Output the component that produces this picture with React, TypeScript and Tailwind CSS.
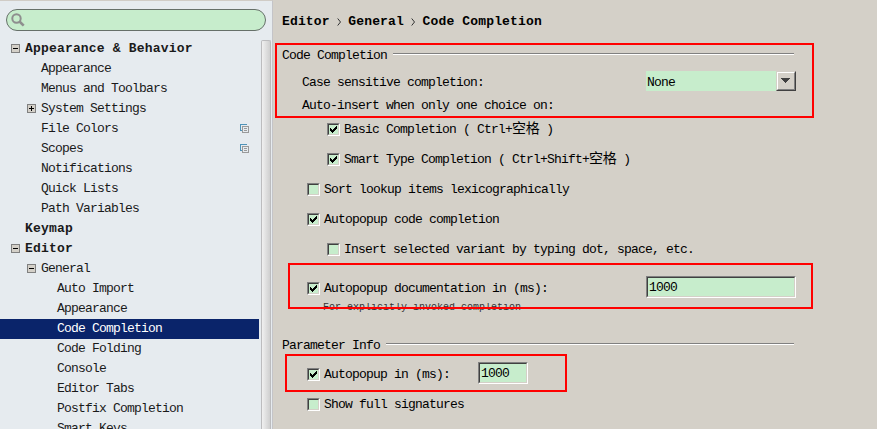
import type { ReactNode } from "react";

const MONO = "font-['Liberation_Mono','Noto_Sans_CJK_SC',monospace]";

type Item = {
  label: string;
  level: 0 | 1 | 2;
  toggle?: "plus" | "minus";
  project?: boolean;
  selected?: boolean;
};

const items: Item[] = [
  { label: "Appearance & Behavior", level: 0, toggle: "minus" },
  { label: "Appearance", level: 1 },
  { label: "Menus and Toolbars", level: 1 },
  { label: "System Settings", level: 1, toggle: "plus" },
  { label: "File Colors", level: 1, project: true },
  { label: "Scopes", level: 1, project: true },
  { label: "Notifications", level: 1 },
  { label: "Quick Lists", level: 1 },
  { label: "Path Variables", level: 1 },
  { label: "Keymap", level: 0 },
  { label: "Editor", level: 0, toggle: "minus" },
  { label: "General", level: 1, toggle: "minus" },
  { label: "Auto Import", level: 2 },
  { label: "Appearance", level: 2 },
  { label: "Code Completion", level: 2, selected: true },
  { label: "Code Folding", level: 2 },
  { label: "Console", level: 2 },
  { label: "Editor Tabs", level: 2 },
  { label: "Postfix Completion", level: 2 },
  { label: "Smart Keys", level: 2 },
];

const indent = ["pl-[11px]", "pl-[27px]", "pl-[43px]"];

function Toggle({ kind }: { kind?: "plus" | "minus" }) {
  if (!kind) return <span className="w-[9px] shrink-0" />;
  return (
    <svg width="9" height="9" viewBox="0 0 9 9" shapeRendering="crispEdges" className="mb-[2px] shrink-0">
      <rect width="9" height="9" fill="#808080" />
      <rect x="1" y="1" width="7" height="7" fill="#d4d0c8" />
      <rect x="2" y="4" width="5" height="1" fill="#000" />
      {kind === "plus" && <rect x="4" y="2" width="1" height="5" fill="#000" />}
    </svg>
  );
}

function ProjectIcon() {
  return (
    <svg width="9" height="9" viewBox="0 0 9 9" shapeRendering="crispEdges" className="mr-[10px] mb-[2px] ml-auto shrink-0">
      <path d="M0 0H7V1H1V6H2V7H0Z" fill="#4f93b8" />
      <path d="M2 2H9V9H2ZM3 3V8H8V3Z" fill="#9a9a9a" fillRule="evenodd" />
      <path d="M4 4H7V5H4ZM4 6H7V7H4Z" fill="#9a9a9a" />
    </svg>
  );
}

function TreeRow({ item }: { item: Item }) {
  return (
    <li
      className={`flex h-5 shrink-0 items-center gap-[5px] ${indent[item.level]} ${
        item.selected ? "bg-[#0a246a] text-white" : "text-[#1a1a1a]"
      }`}
    >
      <Toggle kind={item.toggle} />
      <span
        className={
          item.level === 0
            ? "text-[13px] leading-5 font-bold tracking-[0.18px] whitespace-pre"
            : "text-[13px] leading-5 tracking-[-0.8px] whitespace-pre"
        }
      >
        {item.label}
      </span>
      {item.project && <ProjectIcon />}
    </li>
  );
}

function Sidebar() {
  return (
    <aside className="flex w-[273px] shrink-0 flex-col overflow-hidden border-t border-r border-t-[#d0ccc6] border-r-[#c4c4c8] bg-[#e6ebef]">
      <div className="mt-2 ml-1.5 flex h-[22px] w-[260px] shrink-0 items-center rounded-full border border-[#667069] bg-[#c7edcc] pl-1">
        <svg width="14" height="14" viewBox="0 0 14 14" fill="none" stroke="#8e8e8e">
          <circle cx="5.5" cy="5.5" r="4.2" strokeWidth="2" />
          <path d="M8.5 8.5L12.7 12.7" strokeWidth="2.6" />
        </svg>
      </div>
      <div className="mt-2 flex min-h-0 flex-1">
        <ul className="flex w-[259px] shrink-0 flex-col">
          {items.map((item, i) => (
            <TreeRow key={i} item={item} />
          ))}
        </ul>
        <div className="mt-[1px] ml-[2px] w-[10px] rounded-t-[2px] border-x border-t border-x-[#bcbcbe] border-t-[#bcbcbe] bg-linear-to-r from-[#f0f0f0] to-[#cfcfcf]" />
      </div>
    </aside>
  );
}

function Bevel({ className, children }: { className: string; children?: ReactNode }) {
  return (
    <span className={`flex shrink-0 border border-t-[#808080] border-r-white border-b-white border-l-[#808080] ${className}`}>
      <span className="flex flex-1 items-center border border-t-[#404040] border-r-[#d4d0c8] border-b-[#d4d0c8] border-l-[#404040] bg-[#c7edcc]">
        {children}
      </span>
    </span>
  );
}

function Check({ checked, children }: { checked?: boolean; children: ReactNode }) {
  return (
    <label className="flex h-[30px] items-center gap-1">
      <Bevel className="size-[13px]">
        {checked && (
          <svg width="9" height="9" viewBox="0 0 9 9" shapeRendering="crispEdges">
            <path
              d="M1 3h1v1h1v1h1v-1h1v-1h1v-1h1v-1h1v3h-1v1h-1v1h-1v1h-1v1h-1v-1h-1v-1h-1z"
              fill="#000"
            />
          </svg>
        )}
      </Bevel>
      <span className="pt-[2px] whitespace-pre">{children}</span>
    </label>
  );
}

function Space() {
  return <span className="font-['Noto_Sans_CJK_SC',sans-serif] text-[14px] leading-none tracking-[-0.4px]">空格</span>;
}

function SectionTitle({ children }: { children: string }) {
  return (
    <h2 className="flex h-5 items-center gap-[6px]">
      <span className="pt-[2px] whitespace-pre">{children}</span>
      <span className="-mt-[2px] h-[2px] flex-1 border-t border-b border-t-[#808080] border-b-white" />
    </h2>
  );
}

function Chevron() {
  return (
    <svg width="5" height="8" viewBox="0 0 5 8" fill="none" stroke="#333" className="mx-[6.8px]">
      <path d="M0.7 0.5L3.5 4L0.7 7.5" />
    </svg>
  );
}

export default function App() {
  return (
    <div className={`relative flex h-[429px] w-[877px] overflow-hidden bg-[#d4d0c8] text-[13px] leading-5 tracking-[-0.8px] text-black ${MONO}`}>
      <Sidebar />
      <main className="flex w-[521px] flex-col pt-[12px] pl-[9px]">
        <h1 className="flex h-5 items-center font-bold tracking-[0.15px]">
          Editor
          <Chevron />
          General
          <Chevron />
          Code Completion
        </h1>

        <section className="mt-[13px] flex flex-col">
          <SectionTitle>Code Completion</SectionTitle>
          <div className="mt-[6px] -mr-[2px] flex h-5 items-center justify-between pl-5">
            <span className="mt-[3px]">Case sensitive completion:</span>
            <div className="flex h-5 w-[150px]">
              <span className="flex flex-1 items-center bg-[#c7edcc] pl-[1px]">
                <span className="mt-[3px]">None</span>
              </span>
              <span className="flex w-5 border border-t-[#d4d0c8] border-r-[#404040] border-b-[#404040] border-l-[#d4d0c8]">
                <span className="flex flex-1 items-center justify-center border border-t-white border-r-[#808080] border-b-[#808080] border-l-white">
                  <svg width="9" height="5" viewBox="0 0 9 5" shapeRendering="crispEdges" className="-mt-[1px] -ml-[1px]">
                    <path d="M0 0h9v1h-1v1h-1v1h-1v1h-1v1h-1v-1h-1v-1h-1v-1h-1v-1h-1z" fill="#404040" />
                  </svg>
                </span>
              </span>
            </div>
          </div>
          <div className="mt-[5px] pl-5">Auto-insert when only one choice on:</div>
          <div className="-mt-[2px] pl-[45px]">
            <Check checked>
              Basic Completion ( Ctrl+
              <Space /> )
            </Check>
            <Check checked>
              Smart Type Completion ( Ctrl+Shift+
              <Space /> )
            </Check>
          </div>
          <div className="pl-[25px]">
            <Check>Sort lookup items lexicographically</Check>
            <Check checked>Autopopup code completion</Check>
            <div className="pl-5">
              <Check>Insert selected variant by typing dot, space, etc.</Check>
            </div>
          </div>
          <div className="mt-[9px] -mr-[2px] flex h-[30px] items-center justify-between pl-[25px]">
            <Check checked>Autopopup documentation in (ms):</Check>
            <Bevel className="-mt-[3px] h-[22px] w-[150px]">
              <span className="pt-[2px] pl-[1px]">1000</span>
            </Bevel>
          </div>
          <div className="h-[9px] overflow-hidden pl-[41px] text-[10px] leading-[10px] tracking-[0px] text-[#333]">
            For explicitly invoked completion
          </div>
        </section>

        <section className="mt-[23px] flex flex-col">
          <SectionTitle>Parameter Info</SectionTitle>
          <div className="mt-[4px] flex h-[30px] items-center pl-[25px]">
            <div className="w-[171px]">
              <Check checked>Autopopup in (ms):</Check>
            </div>
            <Bevel className="-mt-[3px] h-[22px] w-[50px]">
              <span className="pt-[2px] pl-[1px]">1000</span>
            </Bevel>
          </div>
          <div className="pl-[25px]">
            <Check>Show full signatures</Check>
          </div>
        </section>
      </main>

      <div className="pointer-events-none absolute top-[43px] left-[275px] h-[75px] w-[539px] border-2 border-[#ff0000]" />
      <div className="pointer-events-none absolute top-[263px] left-[288px] h-[46px] w-[525px] border-2 border-[#ff0000]" />
      <div className="pointer-events-none absolute top-[354px] left-[285px] h-[38px] w-[282px] border-2 border-[#ff0000]" />
    </div>
  );
}
